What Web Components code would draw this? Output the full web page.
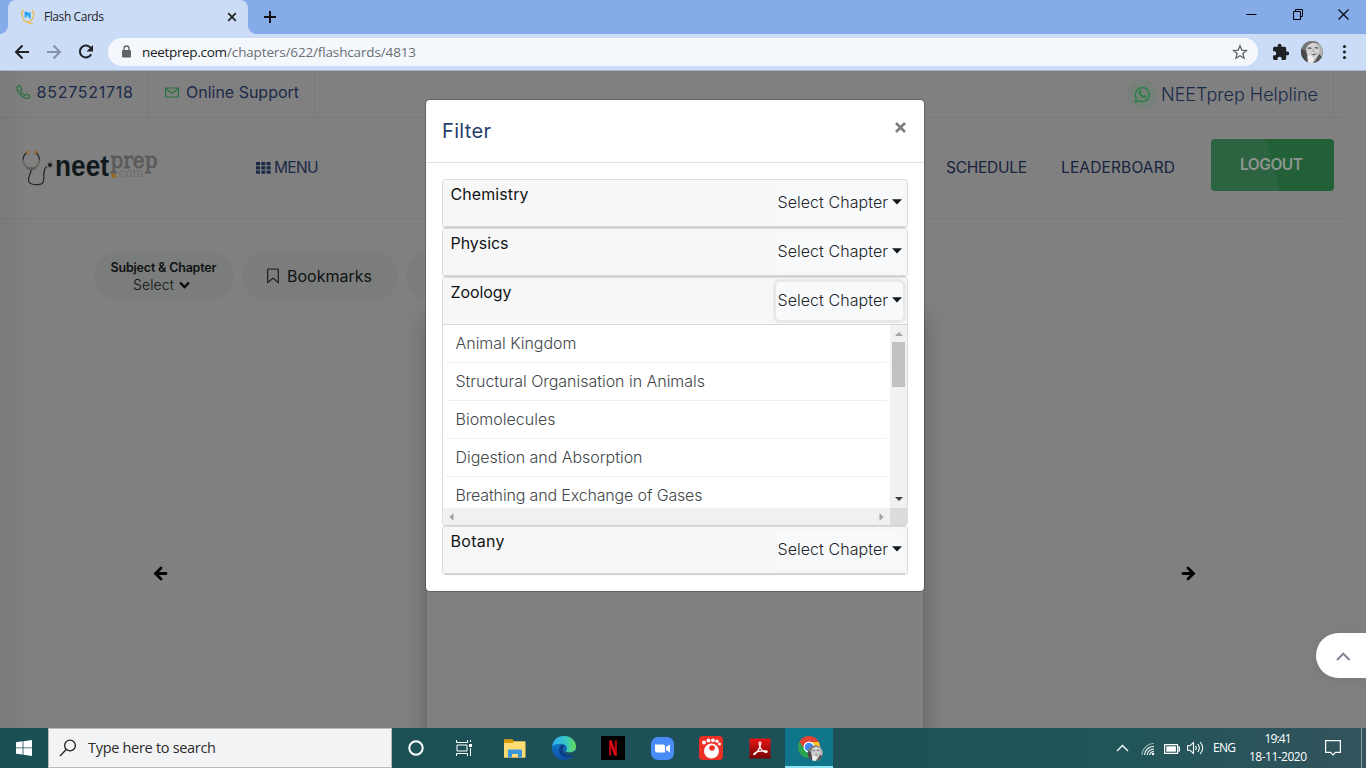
<!DOCTYPE html>
<html lang="en"><head><meta charset="utf-8"><title>Flash Cards</title>
<style>html,body{margin:0;width:1366px;height:768px;overflow:hidden;background:#808080}</style></head>
<body><desktop-screen></desktop-screen>
<script>
const define=(name,css,html,ready)=>customElements.define(name,class extends HTMLElement{
  connectedCallback(){
    if(this.shadowRoot)return;
    const r=this.attachShadow({mode:'open'});
    r.innerHTML='<style>*{box-sizing:border-box}'+css+'</style>'+(typeof html==='function'?html(this):html);
    if(ready)ready(this,r);
  }
});

// A single line of text set to a given measure with even tracking
define('fit-text',':host{display:block;white-space:nowrap;flex:none}span{display:inline-block}','<span><slot></slot></span>',(el,r)=>{
  const w=+el.getAttribute('w'),s=r.querySelector('span');
  const n=el.textContent.length,nat=s.getBoundingClientRect().width;
  s.style.letterSpacing=((w-nat)/Math.max(1,n-1)).toFixed(3)+'px';
  el.style.width=w+'px';
});

define('tab-strip',`:host{display:flex;height:34px;background:#85ace9;align-items:stretch;padding-left:8px;font:12px/34px "Open Sans","Noto Sans",sans-serif;color:#202124}
.tab{position:relative;width:240px;background:#cbdcf6;border-radius:8px 8px 0 0;display:flex;align-items:center;padding:0 11px 0 12px}
.tab:before,.tab:after{content:"";position:absolute;bottom:0;width:8px;height:8px}
.tab:before{left:-8px;background:radial-gradient(circle at 0 0,transparent 7.5px,#cbdcf6 8px)}
.tab:after{right:-8px;background:radial-gradient(circle at 100% 0,transparent 7.5px,#cbdcf6 8px)}
fit-text{margin-left:8px;margin-right:auto}
svg{display:block;flex:none}.plus{margin:10px 0 0 15px}.win{margin-left:auto;display:flex;padding-right:17px;gap:34px;align-items:center;height:29px}`,
`<div class="tab"><svg width="16" height="18" viewBox="0 0 16 18" fill="none"><path d="M4 2.200C1 3 2 8 3 11c1 2 3 3 5 3s4-2 5-4c1-3 1-7-1-8M8 14c0 1.500 1 1.800 5 1.800" stroke="#e9bd59" stroke-width="1.400"/><path d="M5.600 9.500V4.800h1l2.800 3.700V4.800M9.600 4.500v5" stroke="#1aa0f5" stroke-width="1.900"/></svg><fit-text w="60">Flash Cards</fit-text>
<svg width="10" height="10" viewBox="0 0 10 10"><path d="m1.200 1.200 7.600 7.600m0-7.600L1.200 8.800" stroke="#202124" stroke-width="1.700"/></svg></div>
<svg class="plus" width="14" height="14" viewBox="0 0 14 14"><path d="M7 1v12M1 7h12" stroke="#111" stroke-width="2"/></svg>
<div class="win"><svg width="11" height="11"><path d="M.5 5.500h10" stroke="#000"/></svg>
<svg width="13" height="11" viewBox="0 0 13 11" fill="none" stroke="#000"><path d="M2.500 2.500h7v8h-7zM4.500 2.500v-2h7v7h-2"/></svg>
<svg width="11" height="11"><path d="m.5.5 10 10m0-10-10 10" stroke="#000" stroke-width="1.100"/></svg></div>`);

const portrait=(s)=>`<svg width="${s}" height="${s}" viewBox="0 0 22 22"><defs><clipPath id="c"><circle cx="11" cy="11" r="11"/></clipPath></defs><g clip-path="url(#c)"><path fill="#8a8a8a" d="M0 0h22v22H0z"/><path fill="#4a4a4a" d="M0 6 5 8l2 14H0z"/><path fill="#b0b0b0" d="M3 5 9-1l11 2 2 9-4 12-9-3z"/><ellipse cx="12" cy="10" rx="6.500" ry="8.500" fill="#d2d2d2"/><path d="M7 7.500q1.500-1 3.500 0m3-.500q2-1 3.500 .500" stroke="#555" stroke-width="1.300" fill="none"/><path d="M12 8l.5 3" stroke="#999"/><path d="M9.500 12.500q3.500 1.500 6.500-.800-1 3-4 2.500z" fill="#666"/><path d="M6.500 15l3-1 4 4-2 4H7z" fill="#eee"/><path d="M18 13l4 4-5 5h-4z" fill="#555"/><path d="M3.500 10 7 4l5-2.500L18 3 16-2H5L0 7z" fill="#777"/></g></svg>`;

define('address-bar',`:host{display:flex;height:37px;padding:4px 15px 4px 14px;align-items:center;background:#cbdcf6;border-bottom:1px solid #a6b6cd}
svg{display:block;flex:none}.nav{display:flex;gap:16px;margin-right:14px;align-items:center}
.url{height:28px;width:1150px;border-radius:14px;background:#f4f8fd;display:flex;align-items:center;padding:0 10px 0 12px;font:13.500px/28px "Open Sans","Noto Sans",sans-serif;color:#202124}
fit-text{margin-left:9px}fit-text+fit-text{margin-left:0;color:#6b6e73}.star{margin-left:auto}.ext{margin-left:13px}.me{margin-left:12px;height:22px}.dots{margin-left:15px}`,
`<div class="nav"><svg width="16" height="16" viewBox="0 0 16 16" fill="none" stroke="#202124" stroke-width="2"><path d="M15 8H2.500M8.500 1.500 2 8l6.500 6.500"/></svg>
<svg width="16" height="16" viewBox="0 0 16 16" fill="none" stroke="#8591a6" stroke-width="2"><path d="M1 8h12.500M7.500 1.500 14 8l-6.500 6.500"/></svg>
<svg width="16" height="16" viewBox="0 0 16 16"><path d="M13.200 10.300A6 6 0 1 1 12.800 4" stroke="#202124" stroke-width="2" fill="none"/><path d="M15 1v6.500H8.500z" fill="#202124"/></svg></div>
<div class="url" style="width:1151px"><svg width="13" height="14" viewBox="0 0 13 14"><path d="M3 5h7q1 0 1 1v5.500q0 1-1 1H3q-1 0-1-1V6q0-1 1-1z" fill="#5f6368"/><path d="M4 6V3.500a2.500 2.500 0 0 1 5 0V6" stroke="#5f6368" stroke-width="1.300" fill="none"/></svg>
<fit-text w="85">neetprep.com</fit-text><fit-text w="189">/chapters/622/flashcards/4813</fit-text>
<svg class="star" width="16" height="16" viewBox="0 0 16 16"><path d="m8 1.800 1.800 4.300 4.700.4-3.600 3.100 1.100 4.600L8 11.800l-4 2.400 1.100-4.600-3.600-3.100 4.700-.4z" fill="none" stroke="#5f6368" stroke-width="1.300"/></svg></div>
<svg class="ext" width="18" height="17" viewBox="0 0 22 22" style="margin-bottom:2px"><path fill="#202124" d="M20.500 11H19V7c0-1.100-.9-2-2-2h-4V3.500a2.500 2.500 0 0 0-5 0V5H4c-1.100 0-2 .9-2 2v3.800h1.500a2.700 2.700 0 0 1 0 5.400H2V20c0 1.100.9 2 2 2h3.800v-1.500a2.700 2.700 0 0 1 5.400 0V22H17c1.100 0 2-.9 2-2v-4h1.500a2.500 2.500 0 0 0 0-5z"/></svg>
<div class="me">${portrait(22)}</div>
<svg class="dots" width="13" height="16" viewBox="0 0 13 16" fill="#202124"><circle cx="6.500" cy="2.500" r="1.600"/><circle cx="6.500" cy="8" r="1.600"/><circle cx="6.500" cy="13.500" r="1.600"/></svg>`);

define('contact-bar',`:host{display:flex;height:47px;width:1349px;border-bottom:1px solid rgba(0,0,0,.06);color:#1b2a48;font:16px/43px Inter,sans-serif}
.c{display:flex;align-items:center;height:46px;border-right:1px solid #797979;padding-bottom:3px}svg{flex:none}
.a{width:149px;padding-left:16px}.b{width:166px;padding-left:16px}.h{margin-left:auto;margin-right:15px;width:207px;font-size:18px;font-weight:300;padding-bottom:0}
fit-text{margin-left:7px}.a fit-text{margin-left:5.500px}.h fit-text{margin-left:4px}.wa{width:30px;height:30px;border-radius:50%;background:#788179;display:flex;align-items:center;justify-content:center}`,
`<div class="c a"><svg width="15" height="15" viewBox="0 0 15 15" fill="none" stroke="#28733c" stroke-width="1.200"><path d="M2.500 1 1 2.500c-.5 4.500 6 11.500 11 11l1.800-1.700c.4-.4 0-.9-.4-1.200l-2.200-1.400c-.5-.3-1-.1-1.300.3l-.8 1C7 9.500 5 7.500 4.300 5.800l1-.8c.4-.3.500-.8.3-1.200L4.200 1.200C3.800.6 3 .5 2.500 1z"/></svg><fit-text w="96.5">8527521718</fit-text></div>
<div class="c b"><svg width="14" height="11" viewBox="0 0 14 11" fill="none" stroke="#28733c" stroke-width="1.200"><path d="M.6 1h12.800v9H.6zM.8 1.500 7 6.500l6.200-5"/></svg><fit-text w="113">Online Support</fit-text></div>
<div class="c h"><span class="wa"><svg width="17" height="17" viewBox="0 0 17 17"><path d="M1.300 15.700 2.300 12A7 7 0 1 1 5 14.700z" fill="none" stroke="#288045" stroke-width="1.500"/><path d="M5.700 4.500c.7-.4 1-.1 1.300.6l.4 1c.2.500-.5 1-.5 1.300.5 1 1.400 1.800 2.600 2.300.4.100.9-1 1.400-.8l1.500.8c.5.300-.2 1.600-.8 1.900-3 1.300-7.500-3.200-6.900-5.700.1-.6.500-1.100 1-1.400z" fill="#288045"/></svg></span><fit-text w="157">NEETprep Helpline</fit-text></div>`);

define('site-header',`:host{display:flex;height:101px;width:1349px;border-bottom:1px solid rgba(0,0,0,.06);color:#17233f;font:15.500px/20px Inter,sans-serif;padding:0 15px 0 20px}
svg{flex:none;display:block}.logo{margin-top:28px}.menu{display:flex;align-items:center;height:20px;margin:40px 0 0 61px;gap:3px;color:#1b2a48}
nav{display:flex;gap:34px;margin:40px 36px 0 auto}.out{width:123px;height:52px;margin-top:21px;padding:0 2px 1px 0;border-radius:4px;background:linear-gradient(75deg,#2c6340 50%,#226038 50.800%);color:#8f9690;display:flex;align-items:center;justify-content:center;font-weight:600;font-size:15.500px}`,
`<svg class="logo" width="175" height="44" viewBox="20 146 175 44"><g fill="none" stroke-linecap="round">
<path d="M27 152.500q-3.600 2-4 7.500" stroke="#22282c" stroke-width="1.200"/><path d="M35.500 152.500q3.600 2 4 7.500" stroke="#22282c" stroke-width="1.200"/>
<path d="M23 160.500q2 8 8.200 9.300 6.500-1.300 8.300-9.300" stroke="#69675f" stroke-width="1.800"/><path d="M25 166q6.500 2.500 12.500 0l-3 4h-6z" fill="#62605a" stroke="none"/>
<path d="M26.500 152.300l1.500-.3m7 0 1.500.3" stroke="#9a6a13" stroke-width="2"/>
<path d="M31.200 170.500c-1 4-3.300 6.300-2.600 10 .7 4 4 4.300 8 4.100 5-.1 7.400-1.200 7.200-5.600-.2-7 .2-12 3.500-12.700" stroke="#22282c" stroke-width="1.200"/></g>
<circle cx="50" cy="165" r="3.700" fill="#75746e"/><circle cx="50" cy="165" r="1.900" fill="#15191c"/>
<text x="55" y="175.500" textLength="54" lengthAdjust="spacingAndGlyphs" font-family="Liberation Sans,sans-serif" font-weight="700" font-size="29" fill="#11191d">neet</text>
<text x="110.500" y="168" textLength="47" lengthAdjust="spacingAndGlyphs" font-family="DejaVu Serif,serif" font-size="22" fill="#5a5a5a" stroke="#5a5a5a" stroke-width=".8">prep</text>
<circle cx="113.700" cy="175.800" r="2.200" fill="#976816"/><text x="118.500" y="176.500" textLength="25" lengthAdjust="spacingAndGlyphs" font-family="DejaVu Serif,serif" font-size="12" fill="#6d6c67">com</text></svg>
<div class="menu"><svg width="15" height="12" viewBox="0 0 15 12" fill="#1b2a48"><path d="M0 0h4v3.200H0zM5.300 0h4v3.200h-4zM10.600 0h4v3.200h-4zM0 4.300h4v3.200H0zM5.300 4.300h4v3.200h-4zM10.600 4.300h4v3.200h-4zM0 8.600h4v3.200H0zM5.300 8.600h4v3.200h-4zM10.600 8.600h4v3.200h-4z"/></svg><fit-text w="44.5">MENU</fit-text></div>
<nav><fit-text w="81">SCHEDULE</fit-text><fit-text w="114">LEADERBOARD</fit-text></nav><div class="out"><fit-text w="63">LOGOUT</fit-text></div>`);

define('filter-pills',`:host{display:flex;align-items:center;gap:8px;padding:30px 0 0 94px;height:84px;font:16px/20px Inter,sans-serif;color:#111}
.p{background:#7a7d7c;border-radius:25px;height:50px;width:156px;display:flex;align-items:center;padding-left:24px;gap:7px}
.s{width:140px;height:48px;display:block;padding:8px 0 0 16.500px}.s fit-text{font:600 12.500px/16px Inter,sans-serif}.r{display:flex;align-items:center;gap:5px;margin:0 0 0 22.500px}.s .r fit-text{font:300 14px/17px Inter,sans-serif}`,
`<div class="p s"><fit-text w="106">Subject &amp; Chapter</fit-text><div class="r"><fit-text w="41">Select</fit-text><svg width="11" height="8" viewBox="0 0 11 8"><path d="m1 1.500 4.500 4.500L10 1.500" fill="none" stroke="#080808" stroke-width="2.300"/></svg></div></div>
<div class="p"><svg width="14" height="16" viewBox="0 0 14 16"><path d="M1.700 1.700Q1.700 1 2.500 1h9q.8 0 .8.700V14.500L7 10.300l-5.300 4.200z" fill="none" stroke="#1c1c1c" stroke-width="1.200"/></svg><fit-text w="85">Bookmarks</fit-text></div><div class="p"></div>`);

define('card-stage',`:host{display:flex;flex:1;min-height:0;padding:14px 0 0;clip-path:inset(0)}
.side{width:427px;padding:249px 0 0 153px}.side.r{padding-left:258px}.card{width:496px;height:460px;background:#808080;box-shadow:0 0 22px rgba(0,0,0,.27)}svg{display:block}`,
`<div class="side"><svg width="15" height="15" viewBox="0 0 15 15"><path d="M13 7.500H3M8 2 2.500 7.500 8 13" stroke="#000" stroke-width="2.800" fill="none" stroke-linecap="round"/></svg></div><div class="card"></div>
<div class="side r"><svg width="15" height="15" viewBox="0 0 15 15"><path d="M2 7.500h10M7 2l5.500 5.500L7 13" stroke="#000" stroke-width="2.800" fill="none" stroke-linecap="round"/></svg></div>`);

define('select-button',`:host{display:flex;align-items:center;width:127px;height:38px;margin-right:4px;padding:0 0 2px 1.500px;gap:4px;background:#f8f9fa;border-radius:4px;font:300 16px/20px Inter,sans-serif;color:#212529}
:host([focused]){box-shadow:0 0 0 3px #e6e8ea}svg{flex:none}`,
`<fit-text w="110.5">Select Chapter</fit-text><svg width="10" height="6" viewBox="0 0 10 6"><path d="M0 .3h10L5 5.600z" fill="#16191c"/></svg>`);

define('subject-card',`:host{display:block;border:1px solid #dcdcdc;border-bottom-color:#cfcfcf;border-radius:4px;background:#fff;overflow:hidden}
.head{display:flex;height:47px;background:#f7f7f7;border-bottom:1px solid #d7d7d7;padding:4px 0 0 7.500px;justify-content:space-between;font:16px/20px Inter,sans-serif;color:#121416}`,
el=>`<div class="head"><fit-text w="${el.getAttribute('w')}">${el.getAttribute('name')}</fit-text><select-button ${el.hasAttribute('open')?'focused':''}></select-button></div><slot></slot>`);

const chapters=[['Animal Kingdom',121],['Structural Organisation in Animals',249.5],['Biomolecules',100],['Digestion and Absorption',187],['Breathing and Exchange of Gases',247]];
define('chapter-list',`:host{display:grid;grid-template:183px 17px/1fr 17px;height:200px;font:300 16px/36px Inter,sans-serif;color:#42474b}
.l{overflow:hidden}.i{height:38px;margin:0 1.500px 0 2px;padding-left:10.500px;border-bottom:1px solid #efefef;border-radius:4px}
.v{background:#f1f1f1;display:flex;flex-direction:column;align-items:center;padding:6px 0 6px}.v i{width:13px;height:45px;background:#c1c1c1;margin:6px 0 auto}
.h{background:#f1f1f1;display:flex;justify-content:space-between;align-items:center;padding:0 6px}.k{background:#dcdcdc}svg{display:block;flex:none}`,
`<div class="l">${chapters.map(c=>`<div class="i"><fit-text w="${c[1]}">${c[0]}</fit-text></div>`).join('')}</div>
<div class="v"><svg width="8" height="5"><path d="M0 5h8L4 1z" fill="#a3a3a3"/></svg><i></i><svg width="8" height="5"><path d="M0 0h8L4 4z" fill="#404040"/></svg></div>
<div class="h"><svg width="5" height="8"><path d="M4.500 0v8l-4-4z" fill="#a3a3a3"/></svg><svg width="5" height="8"><path d="M.5 0v8l4-4z" fill="#a3a3a3"/></svg></div><div class="k"></div>`);

define('filter-dialog',`:host{position:absolute;left:426px;top:100px;width:498px;height:491px;background:#fff;border-radius:4px;box-shadow:0 0 0 1px rgba(0,0,0,.22);display:block}
header{display:flex;justify-content:space-between;height:63px;border-bottom:1px solid #dee2e6;padding:19px 18px 0 16px;font:20px/24px Inter,sans-serif;color:#26406a}svg{margin-top:2.500px}main{padding:16px}`,
`<header><fit-text w="49">Filter</fit-text><svg width="11" height="11" viewBox="0 0 11 11"><path d="m1 1 9 9m0-9-9 9" stroke="#7c7c7c" stroke-width="2.600"/></svg></header>
<main><subject-card name="Chemistry" w="78"></subject-card><subject-card name="Physics" w="58"></subject-card><subject-card name="Zoology" w="61" open><chapter-list></chapter-list></subject-card><subject-card name="Botany" w="54"></subject-card></main>`);

define('scroll-top',`:host{position:absolute;right:0;top:633px;width:50px;height:45px;border-radius:23px 0 0 23px;background:#fff;box-shadow:0 2px 14px rgba(0,0,0,.07);display:flex;align-items:center;padding:2px 0 0 20px}`,
`<svg width="15" height="9" viewBox="0 0 15 9"><path d="m1 8 6.300-6.300L13.600 8" fill="none" stroke="#7f8795" stroke-width="2"/></svg>`);

define('task-bar',`:host{display:flex;height:40px;background:linear-gradient(90deg,#1b5055 0,#1d5157 60%,#205559 82%,#33535d 100%);color:#fff;font:12px/18px "Open Sans","Noto Sans",sans-serif}
svg{display:block;flex:none}.st{width:48px;padding:12px 0 0 16px}.q{width:344px;background:#f2f3f5;border:1px solid #b9b9b9;display:flex;align-items:center;padding-left:10px;gap:11px;color:#2b2b2b;font-size:14.500px}
.apps{display:flex;margin-left:-1px}.apps>span{width:49.200px;display:flex;align-items:center;justify-content:center}.apps>span.on{width:48px;background:#0f758a;border-bottom:2px solid #8fe3f5;padding:3px 0 0 3px}
.tray{margin-left:auto;display:flex;align-items:center}.clock{margin:0 18px 0 13px;display:flex;flex-direction:column;align-items:center}.end{width:1px;height:40px;background:#8ba0a5;margin:0 4px 0 20px}`,
`<div class="st"><svg width="16" height="16" viewBox="0 0 16 16" fill="#fff"><path d="M0 2.200 6.600 1.300v6.200H0zM7.400 1.200 16 0v7.500H7.400zM0 8.300h6.600v6.300L0 13.700zM7.400 8.300H16V16l-8.600-1.200z"/></svg></div>
<div class="q"><svg width="18" height="18" viewBox="0 0 18 18" fill="none" stroke="#222" stroke-width="1.300"><circle cx="11" cy="6.500" r="5.400"/><path d="M7.200 10.500 1 17"/></svg><fit-text w="128">Type here to search</fit-text></div>
<div class="apps">
<span><svg width="18" height="18"><circle cx="9" cy="9" r="6.700" fill="none" stroke="#fff" stroke-width="2"/></svg></span>
<span style="width:48px"><svg width="17" height="16" viewBox="0 0 17 16" fill="none" stroke="#fff"><path d="M.5 0v2.500h11V0M.5 16v-2.500h11V16M1 5h10v6H1zM14.500 0v2M14.500 8v8"/><path d="M13 4h3v3h-3z" fill="#fff" stroke="none"/></svg></span>
<span style="width:53px"><svg width="22" height="19" viewBox="0 0 22 19"><path d="M0 .5h8.500l1.500 2H21v16H0z" fill="#f3c23f"/><path d="M0 .5h8.500L10 2.500 8.500 4H0z" fill="#d99b08"/><path d="M0 4h9l1-1.500h11.500v16H0z" fill="#ffdc73"/><path d="M4 18.500v-7q0-1 1-1h12q1 0 1 1v7h-4V15H8v3.500z" fill="#3b97dd"/></svg></span>
<span style="width:46px"><svg width="24" height="24" viewBox="0 0 24 24"><defs><linearGradient id="e1"><stop stop-color="#2ab0f3"/><stop offset=".6" stop-color="#38c9c0"/><stop offset="1" stop-color="#68dd53"/></linearGradient><linearGradient id="e2" x2="0" y2="1"><stop stop-color="#1689d6"/><stop offset="1" stop-color="#0d4fa4"/></linearGradient></defs><circle cx="12" cy="12" r="12" fill="url(#e2)"/><path d="M.2 10.500C1 4 6 0 12 0c7 0 12 5 12 10.500 0 4-3 6-6.300 6-2.500 0-4.300-1-3.500-2 1.700-2 .8-6-3.700-6.500C5.500 7.500 1.500 8.500.2 10.500z" fill="url(#e1)"/><path d="M10 8.500c-4 2-4 9 1 12 4 2.200 8.500 1.200 11-1.500-1 .5-6.500 1.500-9.500-1.500-2.600-2.600-2.500-5 .5-7.500z" fill="#0a3f86"/><path d="M13.500 15c1 2 5.500 2.500 8.500 0l2 1-1.800 3C17.500 20.500 12 18.500 12 14z" fill="#1d5157"/></svg></span>
<span style="width:51px"><svg width="24" height="24" viewBox="0 0 24 24"><path d="M0 0h24v24H0z"/><path d="M9.200 4.500v15m5.600-15v15" stroke="#b20710" stroke-width="2.300"/><path d="M8 4.500h2.600l5.400 15h-2.600z" fill="#e50914"/></svg></span>
<span style="width:48px"><svg width="23" height="23" viewBox="0 0 23 23"><rect width="23" height="23" rx="7" fill="#4a8cf7"/><path d="M4 7.500h8q2 0 2 2v6H6q-2 0-2-2zM15 10l4-2.500v8L15 13z" fill="#fff"/></svg></span>
<span><svg width="24" height="24" viewBox="0 0 24 24"><rect width="24" height="24" rx="4" fill="#ec3025"/><g fill="#fff"><circle cx="12.500" cy="15" r="7.500"/><circle cx="5" cy="6.500" r="2"/><circle cx="9.500" cy="4.500" r="2"/><circle cx="14" cy="4.300" r="1.900"/><circle cx="18" cy="5.300" r="1.700"/><circle cx="20.500" cy="8" r="1.500"/></g><circle cx="13" cy="12" r="2.800" fill="#ec3025"/></svg></span>
<span><svg width="22" height="21" viewBox="0 0 22 21"><defs><linearGradient id="ad" x2="0" y2="1"><stop stop-color="#e81515"/><stop offset="1" stop-color="#770404"/></linearGradient></defs><path d="M.5.5h21v20H.5z" fill="url(#ad)"/><path d="M11 4c-2 0-.3 5 1.500 7.500 2 2.700 5.500 3.500 5.700 2.200.2-1.600-8-1-11.700.8-3 1.600-2 3 0 1 2.300-2.300 4.500-6 5-8.700C12 5 12 4 11 4z" fill="none" stroke="#fff" stroke-width="1.200"/></svg></span>
<span class="on"><svg width="25" height="26" viewBox="0 0 25 26"><circle cx="11" cy="11" r="11" fill="#e44235"/><path d="M1.500 5.500A11 11 0 0 0 10 22l4-6-3-5H5z" fill="#25a452"/><path d="M11 6h9.800A11 11 0 0 1 11 22l4-8z" fill="#fbc625"/><circle cx="11" cy="11" r="5.500" fill="#fff"/><circle cx="11" cy="11" r="4.300" fill="#4285f4"/><g transform="translate(9.500 9.500) scale(.7)">${portrait(22)}</g></svg></span></div>
<div class="tray"><svg width="13" height="8"><path d="m1 7 5.500-5.500L12 7" stroke="#fff" stroke-width="1.300" fill="none"/></svg>
<svg style="margin:1px 0 0 12px" width="14" height="14" viewBox="0 0 14 14" fill="none" stroke="#fff" stroke-width="1.100"><path d="M1 13A12 12 0 0 1 13 1.500" opacity=".55"/><path d="M3.500 13A9 9 0 0 1 13 4.500M6 13a7 7 0 0 1 7-6M8.500 13A5 5 0 0 1 13 9.500"/><circle cx="12" cy="12" r="1.300" fill="#fff" stroke="none"/></svg>
<svg style="margin:1px 0 0 9px" width="16" height="10" viewBox="0 0 16 10"><path d="M.6.600h13v8.800H.6zM14 3h1.400v4H14" fill="none" stroke="#fff" stroke-width="1.200"/><path d="M2.300 2.300h9.600v5.400H2.300z" fill="#fff"/></svg>
<svg style="margin:0 9px 0 7px" width="17" height="14" viewBox="0 0 17 14" fill="none" stroke="#fff"><path d="M.6 4.800h2.300L6.500 1.500v11L2.900 9.200H.6zM8.500 5q1.500 2 0 4M10.800 3q3 4 0 8M13.200 1q5 6 0 12" stroke-width="1.100"/></svg>
<fit-text w="23">ENG</fit-text><div class="clock"><fit-text w="27">19:41</fit-text><fit-text w="58">18-11-2020</fit-text></div>
<svg width="16" height="16" viewBox="0 0 16 16"><path d="M.6.600h14.800v11.800H10.500L8 15l-2.500-2.600H.6z" fill="none" stroke="#fff" stroke-width="1.200"/></svg><span class="end"></span></div>`);

define('site-page',`:host{display:flex;flex-direction:column;flex:1;min-height:0;background:linear-gradient(90deg,#7a7a7a 0,#808080 28px)}`,
`<contact-bar></contact-bar><site-header></site-header><filter-pills></filter-pills><card-stage></card-stage>`);

define('desktop-screen',`:host{position:relative;display:flex;flex-direction:column;width:1366px;height:768px;overflow:hidden}`,
`<tab-strip></tab-strip><address-bar></address-bar><site-page></site-page><task-bar></task-bar><filter-dialog></filter-dialog><scroll-top></scroll-top>`);
</script></body></html>
